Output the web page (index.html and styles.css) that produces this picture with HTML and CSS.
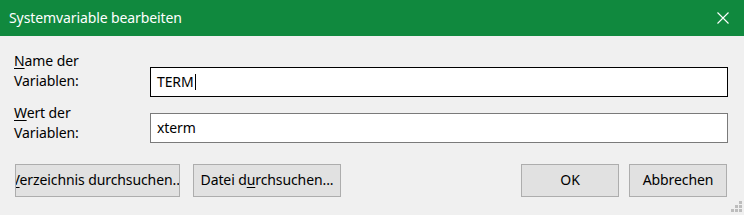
FILE: index.html
```html
<!DOCTYPE html>
<html lang="de">
<head>
<meta charset="utf-8">
<title>Systemvariable bearbeiten</title>
<link rel="stylesheet" href="styles.css">
</head>
<body>
<div class="dialog">
  <div class="titlebar">
    <span class="title">Systemvariable bearbeiten</span>
    <svg class="close" width="12" height="12" viewBox="0 0 12 12"><path d="M0.5 0.5 L11.5 11.5 M11.5 0.5 L0.5 11.5" stroke="#fff" stroke-width="1.1" fill="none"/></svg>
  </div>
  <div class="content">
    <div class="field field-name">
      <div class="label"><u>N</u>ame der<br>Variablen:</div>
      <div class="input input-focus"><span class="value">TERM</span><span class="caret"></span></div>
    </div>
    <div class="field field-value">
      <div class="label"><u>W</u>ert der<br>Variablen:</div>
      <div class="input"><span class="value">xterm</span></div>
    </div>
    <div class="buttons">
      <div class="btn btn-dir"><span class="btn-text"><u>V</u>erzeichnis durchsuchen...</span></div>
      <div class="btn btn-file"><span class="btn-text">Datei d<u>u</u>rchsuchen...</span></div>
      <div class="spacer"></div>
      <div class="btn btn-ok"><span class="btn-text">OK</span></div>
      <div class="btn btn-cancel"><span class="btn-text">Abbrechen</span></div>
    </div>
  </div>
  <svg class="grip" width="12" height="12" viewBox="0 0 12 12" fill="#bdbdbd">
    <rect x="9" y="0" width="3" height="3"/>
    <rect x="5" y="4" width="3" height="3"/><rect x="9" y="4" width="3" height="3"/>
    <rect x="1" y="8" width="3" height="3"/><rect x="5" y="8" width="3" height="3"/><rect x="9" y="8" width="3" height="3"/>
  </svg>
</div>
</body>
</html>
```
FILE: styles.css
```css
* { box-sizing: border-box; }
html, body { margin: 0; padding: 0; }
body {
  width: 744px;
  height: 215px;
  overflow: hidden;
  background: #f0f0f0;
  font-family: "Noto Sans", "Open Sans", sans-serif;
  font-size: 14px;
  letter-spacing: -0.1px;
  color: #000;
}
.dialog {
  position: relative;
  width: 744px;
  height: 215px;
  background: #f0f0f0;
}
.titlebar {
  height: 36px;
  background: #10893e;
  color: #fff;
  display: flex;
  align-items: center;
  padding: 0 15px 0 9px;
}
.title { flex: 1; line-height: 20px; padding-bottom: 1px; }
.close { display: block; }
.content {
  padding: 15px 16px 0 14px;
}
.field {
  display: flex;
  align-items: flex-start;
}
.label {
  width: 136px;
  line-height: 20px;
}
.label u, .btn u { text-decoration-thickness: 1px; text-underline-offset: 2px; }
.input {
  flex: 1;
  height: 30px;
  background: #fff;
  border: 1px solid #7a7a7a;
  display: flex;
  align-items: center;
  padding: 0 0 1px 6px;
  line-height: 20px;
}
.input-focus { border-color: #000; }
.field-name .input { margin-top: 16px; }
.field-value { margin-top: 6px; }
.field-value .input { margin-top: 10px; }
.caret {
  display: inline-block;
  width: 1px;
  height: 16px;
  background: #000;
  margin-left: 1px;
}
.buttons {
  display: flex;
  margin-top: 21px;
}
.btn {
  height: 33px;
  background: #e1e1e1;
  border: 1px solid #adadad;
  display: flex;
  align-items: center;
  justify-content: center;
  overflow: hidden;
  white-space: nowrap;
}
.btn-text { flex: none; line-height: 20px; padding-bottom: 1px; }
.btn-dir { width: 165px; margin-left: 1px; }
.btn-file { width: 148px; margin-left: 13px; }
.spacer { flex: 1; }
.btn-ok { width: 98px; }
.btn-cancel { width: 98px; margin-left: 10px; margin-right: 1px; }
.grip {
  position: absolute;
  right: 2px;
  bottom: 2px;
}
```
